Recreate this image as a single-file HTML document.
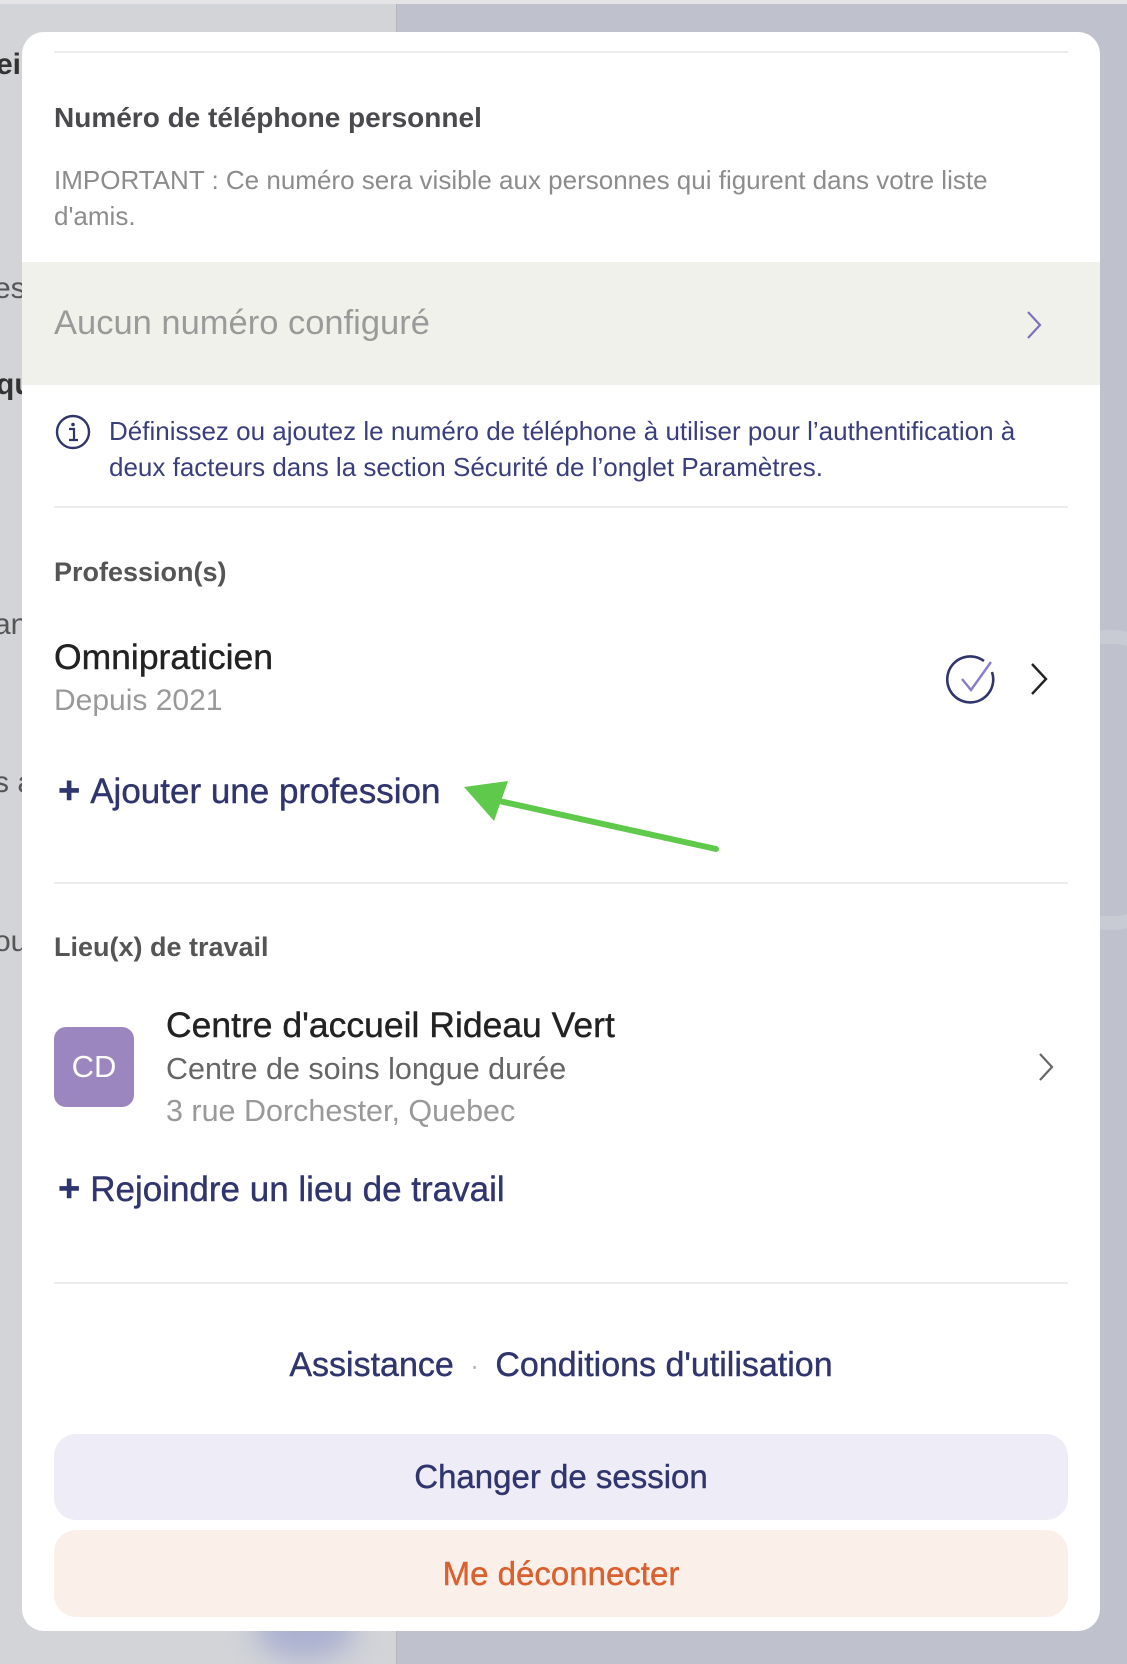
<!DOCTYPE html>
<html><head><meta charset="utf-8"><style>
*{margin:0;padding:0;box-sizing:border-box}
body{width:1127px;height:1664px;position:relative;overflow:hidden;font-family:"Liberation Sans",sans-serif;background:#bfc1cc}
.abs{position:absolute;white-space:nowrap}
#leftbg{position:absolute;left:0;top:0;width:397px;height:1664px;background:#d3d4d8;border-right:1px solid #b5b7c0}
#topstrip{position:absolute;left:0;top:0;width:1127px;height:4px;background:#e4e4e6}
#modal{position:absolute;left:22px;top:32px;width:1078px;height:1599px;background:#fff;border-radius:22px}
.line{position:absolute;left:54px;width:1014px;height:2px;background:#ececec}
.navy{color:#30356e}
.med{-webkit-text-stroke:0.4px currentColor}
.btn{position:absolute;left:54px;width:1014px;border-radius:22px;text-align:center;font-size:33px}
</style></head><body>
<div id="leftbg"></div><div id="topstrip"></div>
<div class="abs" style="left:-4px;top:48px;font-size:30px;font-weight:bold;color:#333">ei</div>
<div class="abs" style="left:-6px;top:272px;font-size:30px;color:#555">es</div>
<div class="abs" style="left:-4px;top:368px;font-size:30px;font-weight:bold;color:#333">qu</div>
<div class="abs" style="left:-6px;top:608px;font-size:30px;color:#555">an</div>
<div class="abs" style="left:-6px;top:766px;font-size:30px;color:#555">s a</div>
<div class="abs" style="left:-6px;top:925px;font-size:30px;color:#555">ou</div>
<div style="position:absolute;left:255px;top:1600px;width:100px;height:60px;border-radius:50%;background:#aab0d0;filter:blur(14px)"></div>
<div style="position:absolute;left:990px;top:630px;width:240px;height:300px;border-radius:50%;border:14px solid #c9cbd4"></div>
<div id="modal"></div>
<div class="line" style="top:51px"></div>
<div class="abs" style="left:54px;top:102px;font-size:28px;font-weight:bold;color:#4a4a4e">Numéro de téléphone personnel</div>
<div class="abs" style="left:54px;top:162px;font-size:26px;color:#8c8c8c;line-height:36px">IMPORTANT : Ce numéro sera visible aux personnes qui figurent dans votre liste<br>d'amis.</div>
<div style="position:absolute;left:22px;top:262px;width:1078px;height:123px;background:#f1f1ec"></div>
<div class="abs" style="left:54px;top:304px;font-size:34.5px;color:#9a9a9a">Aucun numéro configuré</div>
<svg class="abs" style="left:1022px;top:309px" width="24" height="32" viewBox="0 0 24 32"><path d="M6 3 L18 16 L6 29" fill="none" stroke="#7b72b8" stroke-width="2.2"/></svg>
<svg class="abs" style="left:55px;top:414px" width="36" height="36" viewBox="0 0 36 36"><circle cx="18" cy="18" r="16" fill="none" stroke="#30356e" stroke-width="2.4"/><circle cx="18" cy="10.5" r="1.8" fill="#30356e"/><path d="M14 15 H19 V26 M14 26 H23" fill="none" stroke="#30356e" stroke-width="2.2"/></svg>
<div class="abs navy" style="left:109px;top:413px;font-size:26px;line-height:36px;color:#3a3e7c">Définissez ou ajoutez le numéro de téléphone à utiliser pour l’authentification à<br>deux facteurs dans la section Sécurité de l’onglet Paramètres.</div>
<div class="line" style="top:506px"></div>
<div class="abs" style="left:54px;top:557px;font-size:27px;font-weight:bold;color:#555">Profession(s)</div>
<div class="abs med" style="left:54px;top:637px;font-size:35.5px;color:#222">Omnipraticien</div>
<div class="abs" style="left:54px;top:684px;font-size:30px;color:#999">Depuis 2021</div>
<svg class="abs" style="left:946px;top:652px" width="56" height="56" viewBox="0 0 56 56"><path d="M46 20 A23 23 0 1 1 38 9" fill="none" stroke="#30356e" stroke-width="2.6"/><path d="M16 27 L25 38 L45 10" fill="none" stroke="#8a7cc8" stroke-width="2.4"/></svg>
<svg class="abs" style="left:1026px;top:660px" width="26" height="38" viewBox="0 0 26 38"><path d="M6 4 L20 19 L6 34" fill="none" stroke="#222" stroke-width="2.4"/></svg>
<div class="abs navy med" style="left:58px;top:770px;font-size:35px"><span style="font-size:38px;font-weight:bold;margin-right:10px">+</span>Ajouter une profession</div>
<svg class="abs" style="left:450px;top:775px" width="280" height="80" viewBox="0 0 280 80"><path d="M266 74 L40 24" stroke="#5ec94a" stroke-width="6" stroke-linecap="round"/><path d="M14 12 L58 6 L44 46 Z" fill="#5ec94a"/></svg>
<div class="line" style="top:882px"></div>
<div class="abs" style="left:54px;top:932px;font-size:27px;font-weight:bold;color:#555">Lieu(x) de travail</div>
<div class="abs" style="left:54px;top:1027px;width:80px;height:80px;background:#9b86bf;border-radius:12px;color:#fff;font-size:31px;text-align:center;line-height:80px">CD</div>
<div class="abs med" style="left:166px;top:1005px;font-size:35.5px;color:#222">Centre d'accueil Rideau Vert</div>
<div class="abs" style="left:166px;top:1052px;font-size:30.5px;color:#666">Centre de soins longue durée</div>
<div class="abs" style="left:166px;top:1094px;font-size:30.5px;color:#999">3 rue Dorchester, Quebec</div>
<svg class="abs" style="left:1034px;top:1050px" width="24" height="34" viewBox="0 0 24 34"><path d="M6 4 L18 17 L6 30" fill="none" stroke="#666" stroke-width="2.2"/></svg>
<div class="abs navy med" style="left:58px;top:1168px;font-size:35px"><span style="font-size:38px;font-weight:bold;margin-right:10px">+</span>Rejoindre un lieu de travail</div>
<div class="line" style="top:1282px"></div>
<div class="abs navy med" style="left:0;width:1122px;text-align:center;top:1346px;font-size:34px">Assistance <span style="color:#aaa;font-size:20px;margin:0 8px;vertical-align:middle">·</span> Conditions d'utilisation</div>
<div class="btn navy med" style="top:1434px;height:86px;line-height:86px;background:#eeecf6">Changer de session</div>
<div class="btn med" style="top:1530px;height:87px;line-height:87px;background:#fbefea;color:#d9602f">Me déconnecter</div>
</body></html>
